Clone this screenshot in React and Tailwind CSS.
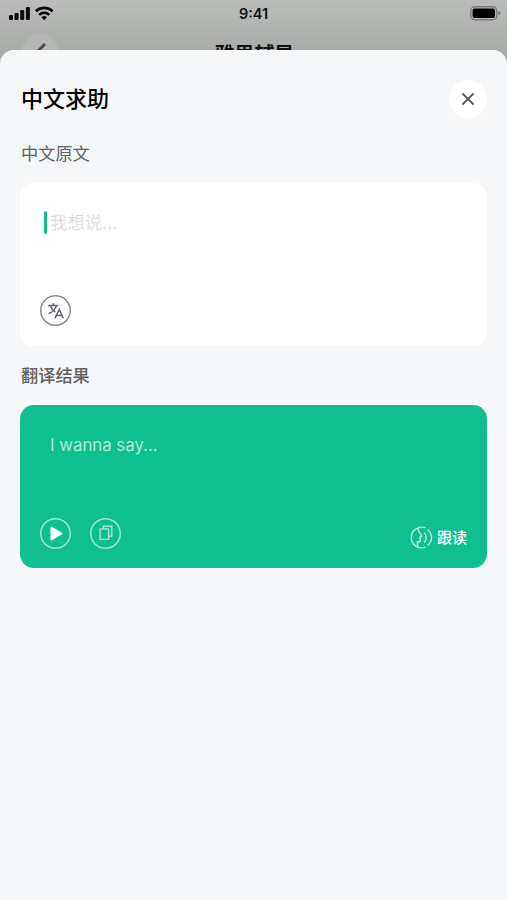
import { useState } from "react";

// Signal and wifi glyphs on the left of the status bar
function SignalIcons() {
  return (
    <svg width="46" height="16" viewBox="0 0 46 16" fill="none" className="-mt-[2px] ml-[1px]">
      <rect x="0" y="10" width="4" height="5" rx="1.2" fill="#0b0b0b" />
      <rect x="5.5" y="8" width="4" height="7" rx="1.2" fill="#0b0b0b" />
      <rect x="11.2" y="5" width="4" height="10" rx="1.2" fill="#0b0b0b" />
      <rect x="16.9" y="2" width="4" height="13" rx="1.2" fill="#0b0b0b" />
      <path d="M26.8 6.200a12.300 12.300 0 0 1 16.800 0" stroke="#0b0b0b" strokeWidth="2.7" />
      <path d="M30.1 9.800a7.400 7.400 0 0 1 10.200 0" stroke="#0b0b0b" strokeWidth="2.5" />
      <path d="M35.2 15.200l-2.800-2.900a4.100 4.100 0 0 1 5.600 0z" fill="#0b0b0b" />
    </svg>
  );
}

function BatteryIcon() {
  return (
    <svg width="32" height="15" viewBox="0 0 32 15" fill="none">
      <rect x="0.8" y="0.8" width="26" height="13" rx="4" stroke="#7b7d7b" strokeWidth="1.4" />
      <rect x="2.6" y="2.6" width="22.4" height="9.4" rx="2" fill="#000" />
      <path d="M28.400 5c1.300.500 2 1.300 2 2.300s-.7 1.800-2 2.300z" fill="#777977" />
    </svg>
  );
}

function TranslateIcon() {
  return (
    <svg width="18" height="18" viewBox="0 0 18 18" fill="none" stroke="#5c6070" strokeWidth="1.5">
      <path d="M1.200 3.600h10M6.200 1.200v2.400M9.400 3.600C8.400 7.400 5.600 10 1.600 11.600M3.400 3.800c1 2.900 2.600 4.700 5 6.200" />
      <path d="M8 16.200l4.200-8.800 4.200 8.800M9.500 13.400h5.400" />
    </svg>
  );
}

function CopyIcon() {
  return (
    <svg width="14" height="16" viewBox="0 0 14 16" fill="none" stroke="#9ee9cf" strokeWidth="1.4">
      <path d="M4.300 3.800V1.200h8.500v10H9.800" />
      <rect x="1.1" y="4" width="8.5" height="10.4" />
    </svg>
  );
}

// Speaking head inside an open circle
function RepeatIcon() {
  return (
    <svg width="23" height="23" viewBox="0 0 23 23" fill="none" stroke="#b9f0de" strokeWidth="1.4" strokeLinecap="round" strokeLinejoin="round">
      <path d="M14.800 1.700A10.300 10.300 0 1 0 14.800 21.300" />
      <path d="M8.200 1.900c-.5 1.700-.2 2.700.9 4 1.100 1.300 2 2.700 2.700 4.400l-1.900.8.500 3.200c0 1.200-.9 1.500-3 1.400l.2 5" />
      <path d="M14.500 7.200c2.300 2.500 2.300 6.300 0 8.800" />
      <path d="M18 3.900c4.700 4.200 4.700 11 0 15.200" />
    </svg>
  );
}

export default function App() {
  const [text, setText] = useState("");

  return (
    <div className="w-full h-[900px] overflow-hidden flex flex-col bg-[#a9aca9] font-['Inter','Noto_Sans_CJK_SC',sans-serif]">
      {/* Dimmed page behind the sheet */}
      <div className="h-[50px] shrink-0 bg-gradient-to-b from-[#bbbdbb] to-[#a9aca9]">
        <div className="h-[27px] px-2 grid grid-cols-3 items-center">
          <SignalIcons />
          <span className="text-center text-[14.5px] font-semibold text-[#111]">9:41</span>
          <div className="justify-self-end -mr-[3px]">
            <BatteryIcon />
          </div>
        </div>
        <div className="h-12 pl-[22px] pr-[58px] pt-[7px] flex items-start">
          <div className="w-9 h-9 rounded-full bg-[#b5b7b5] flex items-center justify-center">
            <svg width="14" height="20" viewBox="0 0 14 20" fill="none">
              <path d="M12 2L4 10l8 8" stroke="#4c4e4c" strokeWidth="3" />
            </svg>
          </div>
          <h2 className="flex-1 mt-[6px] pl-[2px] text-center text-[20px] leading-[30px] font-bold text-[#111]">雅思辅导</h2>
        </div>
      </div>

      {/* Sheet */}
      <div className="relative flex-1 rounded-t-[14px] bg-[#f5f7f9] px-5 pt-[30px]">
        <div className="flex items-center justify-between">
          <h1 className="pl-px text-[22px] leading-[38px] font-medium text-black">中文求助</h1>
          <button className="w-[38px] h-[38px] rounded-full bg-white flex items-center justify-center">
            <svg width="14" height="14" viewBox="0 0 14 14" fill="none" stroke="#5c5c5c" strokeWidth="1.8">
              <path d="M1.500 1.500l11 11M12.500 1.500l-11 11" />
            </svg>
          </button>
        </div>

        <h3 className="pl-px mt-[23px] text-[17.2px] leading-[26px] text-[#606162]">中文原文</h3>
        <div className="mt-[15.5px] h-[163px] rounded-[14px] bg-white px-5 pt-7 pb-[19.5px] flex flex-col justify-between">
          <div className="flex items-center pl-1">
            <div className="w-[3px] h-[23px] rounded-full bg-[#10bf8e]"></div>
            <input
              type="text"
              value={text}
              onChange={(e) => setText(e.target.value)}
              placeholder="我想说..."
              className="flex-1 ml-[3px] pt-[2px] h-[23px] text-[17.2px] tracking-[0.2px] bg-transparent outline-none placeholder:text-[#dedede]"
            />
          </div>
          <button className="w-[31px] h-[31px] rounded-full shadow-[inset_0_0_0_1.5px_#858996] flex items-center justify-center">
            <TranslateIcon />
          </button>
        </div>

        <h3 className="pl-px mt-[17.5px] text-[17.2px] leading-[26px] font-medium text-[#606162]">翻译结果</h3>
        <div className="mt-4 h-[163px] rounded-[14px] bg-[#10bf8f] px-5 pt-7 pb-[19px] flex flex-col justify-between">
          <p className="pl-[10px] text-[16.8px] leading-6 text-[#afead7]">I wanna say...</p>
          <div className="flex items-center">
            <button className="w-[31px] h-[31px] rounded-full shadow-[inset_0_0_0_1.5px_#9ee9cf] flex items-center justify-center">
              <svg width="13" height="15" viewBox="0 0 13 15" className="ml-[2px]">
                <path d="M1.500 1.500v12l10-6z" fill="#fff" stroke="#fff" strokeWidth="2" strokeLinejoin="round" />
              </svg>
            </button>
            <button className="ml-[19px] w-[31px] h-[31px] rounded-full shadow-[inset_0_0_0_1.5px_#9ee9cf] flex items-center justify-center">
              <CopyIcon />
            </button>
            <button className="ml-auto mt-[9px] flex items-center gap-1 text-[15px] leading-[21px] font-medium text-white">
              <RepeatIcon />
              跟读
            </button>
          </div>
        </div>
      </div>
    </div>
  );
}
